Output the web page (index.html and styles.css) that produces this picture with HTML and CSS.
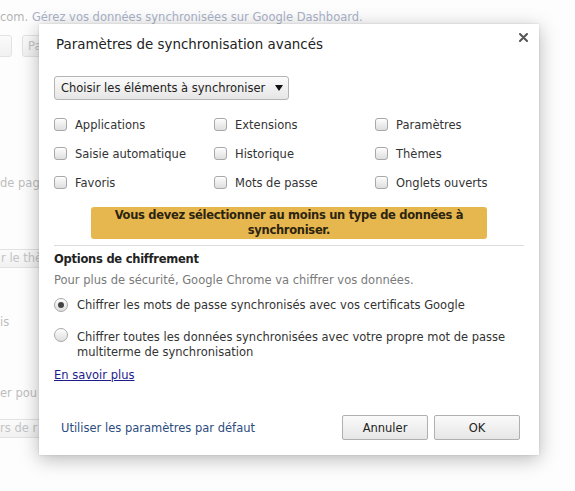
FILE: index.html
```html
<!DOCTYPE html>
<html lang="fr">
<head>
<meta charset="utf-8">
<title>Paramètres de synchronisation avancés</title>
<link rel="stylesheet" href="styles.css">
</head>
<body>
<div class="page">
  <p class="pg-top">com. <span class="pg-link">Gérez vos données synchronisées sur Google Dashboard.</span></p>
  <div class="pg-btns">
    <span class="pg-btn pg-b1"></span>
    <span class="pg-btn pg-b2">Pa</span>
  </div>
  <p class="pg-text pg-t1">de pag</p>
  <div class="pg-btn pg-b3">r le thè</div>
  <p class="pg-text pg-t2">is</p>
  <p class="pg-text pg-t3">er pou</p>
  <div class="pg-btn pg-b4">rs de r</div>
</div>

<div class="dialog">
  <div class="dlg-head">
    <h1 class="dlg-title">Paramètres de synchronisation avancés</h1>
    <svg class="dlg-close" width="9" height="9" viewBox="0 0 9 9"><path d="M1 1L8 8M8 1L1 8" stroke="#555" stroke-width="2" stroke-linecap="round"/></svg>
  </div>

  <div class="select">Choisir les éléments à synchroniser<span class="select-arrow"></span></div>

  <div class="checks">
    <label class="check"><span class="box"></span>Applications</label>
    <label class="check"><span class="box"></span>Extensions</label>
    <label class="check"><span class="box"></span>Paramètres</label>
    <label class="check"><span class="box"></span>Saisie automatique</label>
    <label class="check"><span class="box"></span>Historique</label>
    <label class="check"><span class="box"></span>Thèmes</label>
    <label class="check"><span class="box"></span>Favoris</label>
    <label class="check"><span class="box"></span>Mots de passe</label>
    <label class="check"><span class="box"></span>Onglets ouverts</label>
  </div>

  <div class="warning">Vous devez sélectionner au moins un type de données à synchroniser.</div>

  <div class="sep"></div>

  <h2 class="enc-title">Options de chiffrement</h2>
  <p class="enc-desc">Pour plus de sécurité, Google Chrome va chiffrer vos données.</p>

  <label class="radio r1"><span class="dot checked"></span><span>Chiffrer les mots de passe synchronisés avec vos certificats Google</span></label>
  <label class="radio r2"><span class="dot"></span><span>Chiffrer toutes les données synchronisées avec votre propre mot de passe multiterme de synchronisation</span></label>

  <a class="more" href="#">En savoir plus</a>

  <div class="footer">
    <a class="defaults" href="#">Utiliser les paramètres par défaut</a>
    <div class="actions">
      <button class="btn">Annuler</button>
      <button class="btn">OK</button>
    </div>
  </div>
</div>
</body>
</html>
```

FILE: styles.css
```css
* { box-sizing: border-box; }
html, body {
  margin: 0;
  padding: 0;
}
body {
  width: 575px;
  height: 491px;
  overflow: hidden;
  position: relative;
  background: #fdfdfd;
  font-family: "DejaVu Sans", "Liberation Sans", sans-serif;
  font-size: 11.5px;
  color: #333;
}

/* background page (faded) */
.page {
  color: #b9b9b9;
}
.pg-top {
  margin: 0;
  padding-top: 9px;
  line-height: 16px;
  white-space: nowrap;
  color: #b4b4b4;
}
.pg-link { color: #a9b2c9; }
.pg-btns {
  display: flex;
  gap: 10px;
  margin-top: 10px;
  margin-left: -90px;
}
.pg-btn {
  display: block;
  height: 22px;
  line-height: 20px;
  border: 1px solid #e2e2e2;
  border-radius: 3px;
  background: linear-gradient(#fbfbfb, #f1f1f1);
  color: #c4c4c4;
  padding: 0 5px;
  white-space: nowrap;
}
.pg-b1 { width: 102px; }
.pg-b2 { width: 90px; }
.pg-text {
  margin: 0;
  line-height: 16px;
  white-space: nowrap;
  color: #bdbdbd;
}
.pg-t1 { margin-top: 118px; }
.pg-b3 {
  margin-top: 58px;
  margin-left: -40px;
  width: 120px;
  height: 19px;
  line-height: 17px;
  padding-left: 40px;
}
.pg-t2 { margin-top: 46px; }
.pg-t3 { margin-top: 55px; }
.pg-b4 {
  margin-top: 18px;
  margin-left: -40px;
  width: 120px;
  height: 19px;
  line-height: 17px;
  padding-left: 39px;
}

/* dialog */
.dialog {
  position: absolute;
  left: 39px;
  top: 24px;
  width: 500px;
  height: 431px;
  background: #fff;
  box-shadow: 0 4px 18px rgba(0, 0, 0, 0.28), 0 0 2px rgba(0, 0, 0, 0.12);
  padding: 0 15px 15px;
  display: flex;
  flex-direction: column;
}
.dlg-head {
  display: flex;
  justify-content: space-between;
  align-items: flex-start;
  padding-top: 12px;
}
.dlg-title {
  margin: 0;
  padding-left: 2px;
  font-size: 13.4px;
  font-weight: normal;
  line-height: 18px;
  color: #222;
}
.dlg-close {
  margin-top: -3px;
  margin-right: -4px;
}

.select {
  margin-top: 22px;
  width: 235px;
  height: 24px;
  line-height: 22px;
  border: 1px solid #b4b4b4;
  border-radius: 3px;
  background: linear-gradient(#fbfbfb, #e6e6e6);
  padding-left: 6px;
  color: #222;
  display: flex;
  align-items: center;
  justify-content: space-between;
  padding-right: 5px;
}
.select-arrow {
  width: 0;
  height: 0;
  border-left: 4px solid transparent;
  border-right: 4px solid transparent;
  border-top: 6px solid #111;
}

.checks {
  margin-top: 10px;
  display: grid;
  grid-template-columns: 160px 161px auto;
  grid-auto-rows: 29px;
}
.check {
  display: flex;
  align-items: center;
  gap: 8px;
  color: #333;
}
.box, .dot {
  flex: none;
  width: 13px;
  height: 13px;
  border: 1px solid #a8a8a8;
  border-radius: 3px;
  background: linear-gradient(#fdfdfd, #dedede);
  box-shadow: inset 0 1px 0 #fff;
}

.warning {
  margin: 10px auto 0;
  width: 396px;
  min-height: 32px;
  padding: 1px 10px;
  background: #e7b74f;
  border-radius: 3px;
  font-weight: bold;
  letter-spacing: -0.3px;
  text-align: center;
  line-height: 15px;
  color: #2c2410;
}

.sep {
  margin-top: 6px;
  height: 1px;
  background: #dcdcdc;
}

.enc-title {
  margin: 5px 0 0;
  font-size: 11.5px;
  font-weight: bold;
  letter-spacing: -0.25px;
  line-height: 16px;
  color: #222;
}
.enc-desc {
  margin: 5px 0 0;
  line-height: 16px;
  color: #7a7a7a;
}

.radio {
  display: flex;
  align-items: flex-start;
  gap: 9px;
  line-height: 15px;
  color: #333;
}
.dot {
  width: 14px;
  height: 14px;
  border-radius: 50%;
  margin-top: 0;
  position: relative;
}
.dot.checked::after {
  content: "";
  position: absolute;
  left: 3px;
  top: 3px;
  width: 6px;
  height: 6px;
  border-radius: 50%;
  background: #444;
}
.r1 { margin-top: 10px; }
.r2 { margin-top: 17px; padding-right: 10px; }
.r2 .dot { margin-top: -2px; }

.more {
  margin-top: 7px;
  align-self: flex-start;
  line-height: 16px;
  color: #1c1c8a;
  text-decoration: underline;
}

.footer {
  margin-top: auto;
  display: flex;
  align-items: center;
  justify-content: space-between;
  padding-left: 7px;
  padding-right: 4px;
}
.defaults {
  color: #2d4c80;
  text-decoration: none;
}
.actions {
  display: flex;
  gap: 6px;
}
.btn {
  width: 86px;
  height: 25px;
  font-family: inherit;
  font-size: 11.5px;
  color: #222;
  border: 1px solid #b0b0b0;
  border-radius: 2px;
  background: linear-gradient(#fafafa, #e6e6e6);
  padding: 0;
}
```
